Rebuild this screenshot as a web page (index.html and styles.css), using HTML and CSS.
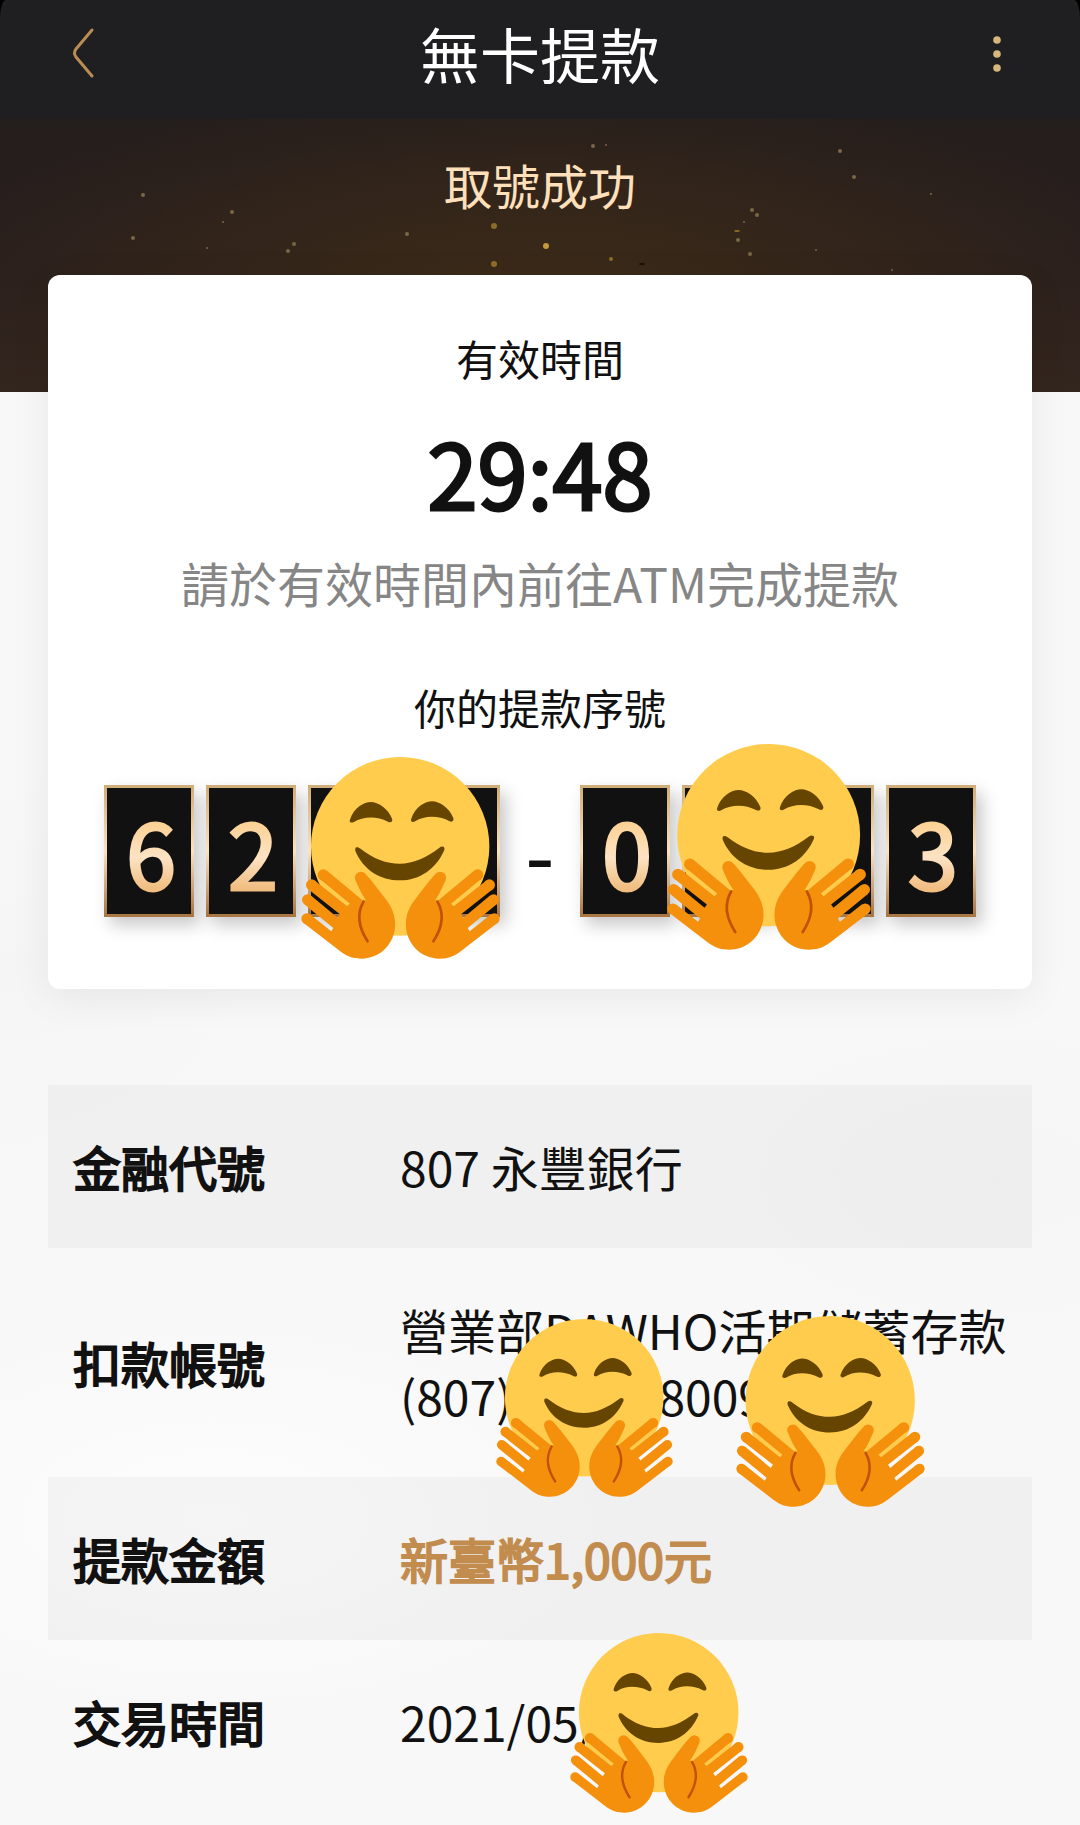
FILE: index.html
```html
<!DOCTYPE html>
<html lang="zh-Hant">
<head>
<meta charset="utf-8">
<meta name="viewport" content="width=device-width, initial-scale=1">
<title>無卡提款</title>
<link rel="stylesheet" href="styles.css">
</head>
<body>
<svg class="defs" aria-hidden="true">
  <defs>
    <g id="hand">
      <path fill="#f4900c" d="M40 547 L150 632 C175 652 195 655 215 655 C272 655 316 608 316 552 C316 515 298 490 285 473 C265 447 245 420 229 403 L197 420 C205 440 215 462 228 480 L218 480 L111 391 L90 416 L180 490 L172 498 L75 421 L55 447 L150 522 L143 532 L62 465 L42 491 L130 563 L124 573 L60 522 Z"/>
      <g fill="#f4900c">
        <circle cx="100" cy="404" r="17"/>
        <circle cx="65" cy="434" r="17"/>
        <circle cx="52" cy="478" r="16"/>
        <circle cx="50" cy="535" r="16"/>
        <circle cx="213" cy="412" r="18"/>
      </g>
      <path fill="none" stroke="#bf5200" stroke-width="8" stroke-linecap="round" d="M221 484 C200 520 204 558 233 603"/>
    </g>
    <path id="eye" fill="#664500" d="M180 238 C192 202 222 185 243 185 C264 185 295 204 307 236 C309 246 301 248 294 244 C262 227 220 227 192 245 C185 249 177 246 180 238 Z"/>
    <symbol id="hug" viewBox="33 50 598 606" preserveAspectRatio="none">
      <circle cx="331" cy="318" r="268" fill="#ffcc4d"/>
      <use href="#eye"/>
      <use href="#eye" transform="translate(184 -2)"/>
      <path fill="#664500" d="M196 325 C198 318 206 320 212 325 C250 355 290 370 330 370 C370 370 410 352 448 323 C456 316 466 318 464 328 C440 385 390 420 330 420 C270 420 220 388 196 331 Z"/>
      <use href="#hand"/>
      <use href="#hand" transform="translate(664 0) scale(-1 1)"/>
    </symbol>
  </defs>
</svg>

<header class="topbar">
  <button class="icon-button" type="button" aria-label="返回">
    <svg width="24" height="52" viewBox="0 0 24 52" fill="none" stroke="#b98b55" stroke-width="3" stroke-linecap="round"><path d="M21 3 L5 22 Q2 26 5 30 L21 49"/></svg>
  </button>
  <h1 class="topbar-title">無卡提款</h1>
  <button class="icon-button" type="button" aria-label="更多">
    <svg width="10" height="38" viewBox="0 0 10 38" fill="#d5b67c"><circle cx="5" cy="6" r="3.8"/><circle cx="5" cy="20" r="3.8"/><circle cx="5" cy="34" r="3.8"/></svg>
  </button>
</header>

<main class="page">
  <section class="hero">
    <svg class="sparks" viewBox="0 0 1080 273" preserveAspectRatio="xMidYMin slice" aria-hidden="true">
      <g fill="#7a6746">
        <circle cx="143" cy="76" r="2"/><circle cx="133" cy="119" r="2"/><circle cx="232" cy="93" r="2"/><circle cx="223" cy="103" r="1"/>
        <circle cx="207" cy="129" r="1"/><circle cx="288" cy="132" r="2"/><circle cx="294" cy="125" r="2"/><circle cx="407" cy="115" r="2"/>
        <circle cx="593" cy="27" r="2"/><circle cx="606" cy="26" r="1"/><circle cx="840" cy="32" r="2"/><circle cx="854" cy="58" r="2"/>
        <circle cx="752" cy="91" r="2"/><circle cx="757" cy="96" r="2"/><circle cx="744" cy="103" r="1"/><circle cx="738" cy="121" r="2"/>
        <circle cx="750" cy="135" r="2"/><circle cx="816" cy="131" r="1"/><circle cx="931" cy="75" r="1"/><circle cx="892" cy="151" r="1"/>
      </g>
      <g fill="#8d6d25">
        <circle cx="494" cy="107" r="3"/><circle cx="494" cy="145" r="3"/><circle cx="611" cy="140" r="2"/>
        <ellipse cx="737" cy="112" rx="3" ry="1"/>
      </g>
      <circle cx="546" cy="127" r="3" fill="#c39a3a"/>
      <ellipse cx="642" cy="145" rx="3" ry="1" fill="#17100a"/>
    </svg>
    <h2 class="hero-title">取號成功</h2>
  </section>

  <section class="ticket">
    <h3 class="caption">有效時間</h3>
    <p class="timer">29:48</p>
    <p class="hint">請於有效時間內前往ATM完成提款</p>
    <h3 class="caption caption-code">你的提款序號</h3>
    <div class="code">
      <div class="code-group">
        <span class="tile"><span class="digit">6</span></span>
        <span class="tile"><span class="digit">2</span></span>
        <span class="tile"></span>
        <span class="tile"></span>
        <svg class="mask mask-code-a" aria-hidden="true"><use href="#hug"/></svg>
      </div>
      <span class="dash">-</span>
      <div class="code-group">
        <span class="tile"><span class="digit">0</span></span>
        <span class="tile"></span>
        <span class="tile"></span>
        <span class="tile"><span class="digit">3</span></span>
        <svg class="mask mask-code-b" aria-hidden="true"><use href="#hug"/></svg>
      </div>
    </div>
  </section>

  <table class="details">
    <tbody>
      <tr><th scope="row">金融代號</th><td>807 永豐銀行</td></tr>
      <tr>
        <th scope="row">扣款帳號</th>
        <td>營業部DAWHO活期儲蓄存款<br>(807)<span class="hidden-digits"></span>8009
          <svg class="mask mask-account-a" aria-hidden="true"><use href="#hug"/></svg>
          <svg class="mask mask-account-b" aria-hidden="true"><use href="#hug"/></svg>
        </td>
      </tr>
      <tr><th scope="row">提款金額</th><td class="amount">新臺幣1,000元</td></tr>
      <tr>
        <th scope="row">交易時間</th>
        <td>2021/05/
          <svg class="mask mask-time" aria-hidden="true"><use href="#hug"/></svg>
        </td>
      </tr>
    </tbody>
  </table>
</main>
</body>
</html>
```
FILE: styles.css
```css
* {
  box-sizing: border-box;
}

body {
  margin: 0;
  background: #000;
  color: #111;
  font-family: "Noto Sans CJK TC", sans-serif;
  font-size: 48px;
  line-height: 66px;
}

h1, h2, h3, p {
  margin: 0;
  font-weight: 400;
}

.defs {
  position: absolute;
  width: 0;
  height: 0;
}

.topbar {
  display: flex;
  align-items: center;
  justify-content: space-between;
  height: 119px;
  padding: 0 48px 14px;
  background: #1f1f21;
  border-radius: 6px 6px 0 0 / 18px 18px 0 0;
}

.topbar-title {
  color: #fff;
  font-size: 60px;
  line-height: 84px;
}

.icon-button {
  display: flex;
  align-items: center;
  justify-content: center;
  width: 70px;
  height: 70px;
  padding: 0;
  border: 0;
  background: none;
}

.page {
  min-height: calc(100vh - 119px);
  padding-bottom: 20px;
  background:
    radial-gradient(ellipse 300px 160px at 92% 62%, #f3f3f499, transparent),
    radial-gradient(ellipse 260px 200px at 0% 50%, #f3f3f499, transparent),
    radial-gradient(ellipse 400px 200px at 20% 82%, #fdfdfd, transparent),
    #f8f8f8;
}

.hero {
  position: relative;
  padding: 32px 48px 175px;
  background: radial-gradient(ellipse 58% 80% at 50% 66%, #3d2b18, #33251a 50%, transparent),
    linear-gradient(#241e1c, #2a1f1e 60%, #33261f);
  text-align: center;
}

.sparks {
  position: absolute;
  inset: 0;
  width: 100%;
  height: 100%;
}

.hero-title {
  position: relative;
  color: #ffe0ba;
  font-size: 48px;
}

.ticket {
  position: relative;
  margin: -117px 48px 0;
  padding: 54px 56px 72px;
  background: #fff;
  border-radius: 12px;
  box-shadow: 0 8px 40px rgba(0, 0, 0, 0.07);
  text-align: center;
}

.caption {
  font-size: 42px;
  line-height: 58px;
}

.caption-code {
  margin-top: 63px;
}

.timer {
  margin: 34px 0 28px;
  font-size: 90px;
  line-height: 100px;
  -webkit-text-stroke: 3px #111;
}

.hint {
  color: #868686;
}

.code {
  display: flex;
  align-items: center;
  justify-content: space-between;
  margin-top: 49px;
}

.code-group {
  position: relative;
  display: flex;
  gap: 12px;
}

.tile {
  width: 90px;
  height: 132px;
  border: 3px solid;
  border-image: linear-gradient(#d0ae7a, #fbe2c2 50%, #a87643) 1;
  background: #111;
  box-shadow: 6px 8px 16px rgba(0, 0, 0, 0.22);
}

.digit {
  display: block;
  padding-left: 4px;
  font-size: 90px;
  line-height: 126px;
  background: linear-gradient(#fbcf90 25%, #fde3c4 55%, #f1bd80 80%);
  -webkit-background-clip: text;
  background-clip: text;
  color: transparent;
  -webkit-text-stroke: 3px transparent;
}

.dash {
  font-size: 80px;
  line-height: 132px;
  -webkit-text-stroke: 1px #111;
}

.details {
  width: calc(100% - 96px);
  margin: 96px 48px 0;
  border-collapse: collapse;
  table-layout: fixed;
  text-align: left;
}

.details tr:nth-child(odd) {
  background: rgba(0, 0, 0, 0.03);
}

.details th {
  width: 352px;
  padding: 48px 0 49px 25px;
  font-weight: 400;
  -webkit-text-stroke: 2px #111;
}

.details td {
  position: relative;
  padding: 48px 0 49px;
}

.details .amount {
  color: #c18c4e;
  -webkit-text-stroke: 2px #c18c4e;
}

.hidden-digits {
  display: inline-block;
  width: 146px;
}

.mask {
  position: absolute;
}

.mask-code-a {
  left: 197px;
  top: -28px;
  width: 199px;
  height: 202px;
}

.mask-code-b {
  left: 87px;
  top: -41px;
  width: 204px;
  height: 206px;
}

.mask-account-a {
  left: 96px;
  top: 71px;
  width: 177px;
  height: 178px;
}

.mask-account-b {
  left: 336px;
  top: 68px;
  width: 189px;
  height: 191px;
}

.mask-time {
  left: 170px;
  top: -7px;
  width: 178px;
  height: 180px;
}
```
